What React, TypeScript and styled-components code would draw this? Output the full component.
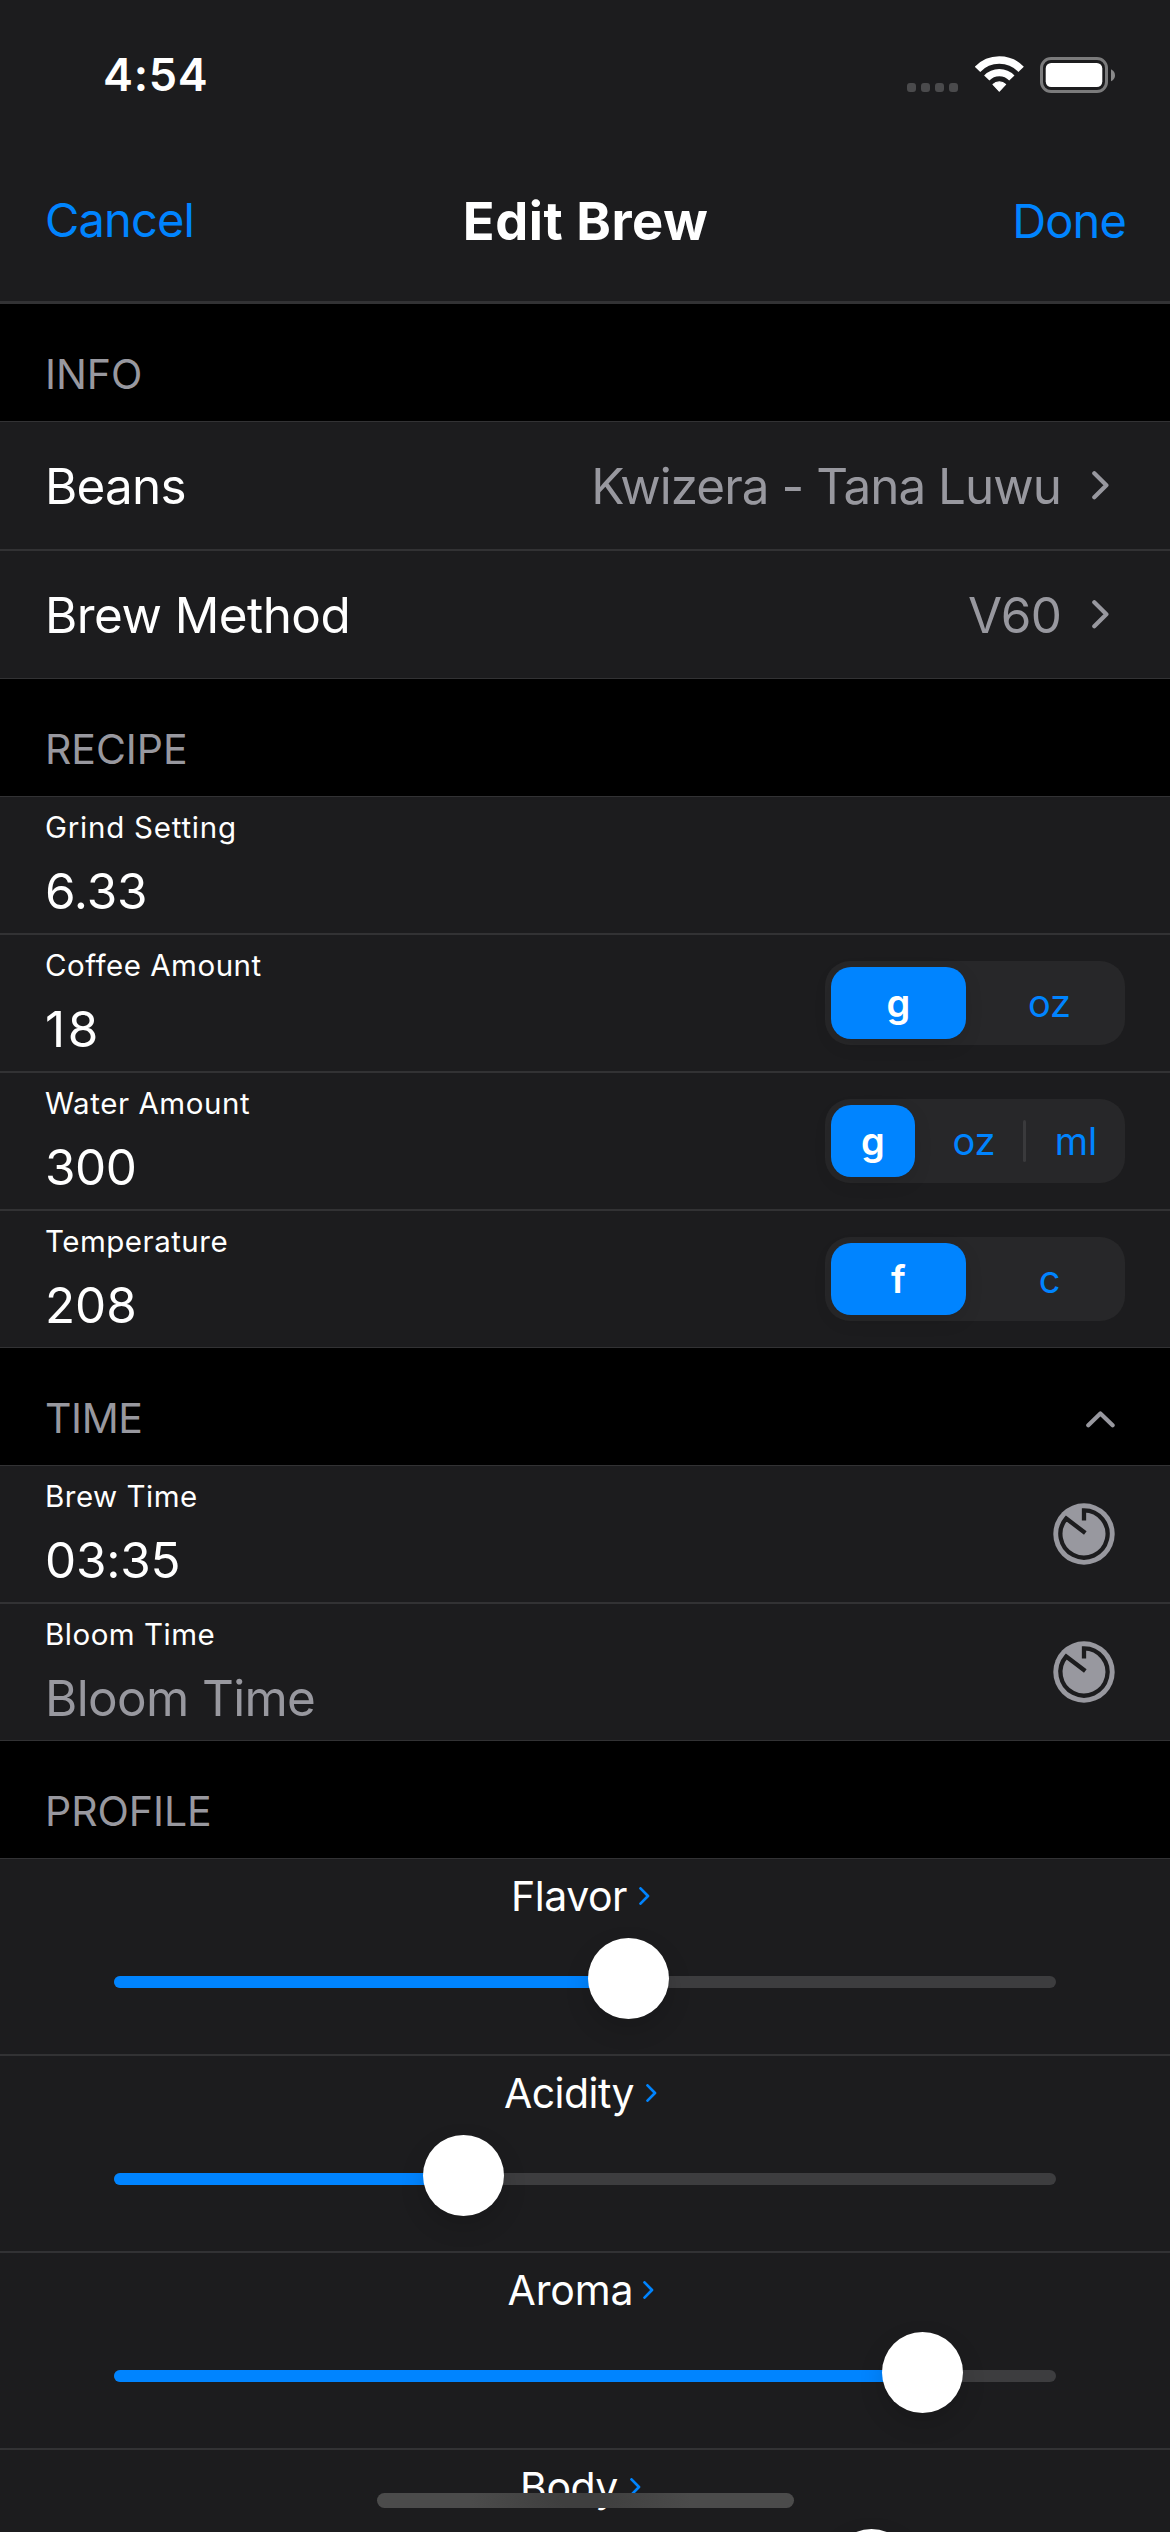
import React from "react";
import styled, { createGlobalStyle } from "styled-components";

const color = {
  page: "#000000",
  cell: "#1c1c1e",
  line: "#323234",
  text: "#ffffff",
  muted: "#98989f",
  accent: "#0084ff",
  control: "#272729",
  track: "#3d3d3f",
};

const GlobalStyle = createGlobalStyle`
  * { box-sizing: border-box; }
  html, body { margin: 0; padding: 0; background: ${color.page}; }
  body {
    font-family: Inter, Roboto, "Liberation Sans", sans-serif;
    color: ${color.text};
    overflow: hidden;
  }
`;

const Screen = styled.main`
  position: relative;
  display: flex;
  flex-direction: column;
  width: 1170px;
  height: 2532px;
  overflow: hidden;
  background: ${color.page};
`;

const TopBar = styled.header`
  flex: none;
  height: 304px;
  background: ${color.cell};
  border-bottom: 3px solid ${color.line};
`;

const StatusBar = styled.div`
  display: flex;
  align-items: center;
  justify-content: space-between;
  height: 141px;
  padding: 8px 55px 0 103px;
`;

const Clock = styled.time`
  font-size: 45px;
  line-height: 54px;
  font-weight: 600;
  letter-spacing: 0.73px;
`;

const StatusIcons = styled.div`
  display: flex;
  align-items: center;
`;

const SignalDots = styled.div`
  display: flex;
  align-self: flex-end;
  gap: 5.4px;
  margin-right: 17px;
  padding-bottom: 1px;
`;

const Dot = styled.i`
  width: 8.6px;
  height: 9px;
  border-radius: 3px;
  background: #4a4a4c;
`;

const WifiIcon = styled.svg`
  display: block;
  width: 49px;
  height: 37px;
  margin-right: 16px;
`;

const BatteryIcon = styled.svg`
  display: block;
  width: 75px;
  height: 36px;
`;

const NavBar = styled.nav`
  display: grid;
  grid-template-columns: 1fr auto 1fr;
  align-items: center;
  height: 160px;
  padding: 0 44px 0 45px;
`;

const NavButton = styled.button<{ $end?: boolean }>`
  justify-self: ${(p) => (p.$end ? "end" : "start")};
  padding: ${(p) => (p.$end ? "0" : "0 0 2px")};
  border: 0;
  background: none;
  color: ${color.accent};
  font: 400 47px/58px Inter, sans-serif;
  letter-spacing: -0.85px;
`;

const Title = styled.h1`
  margin: 0;
  font-size: 52.4px;
  line-height: 64px;
  font-weight: 700;
  letter-spacing: 0.57px;
`;

const SectionHeader = styled.div`
  flex: none;
  display: flex;
  justify-content: space-between;
  height: 117px;
  padding: 45px 55px 0 45px;
  color: ${color.muted};
`;

const SectionTitle = styled.h2<{ $track?: number }>`
  margin: 0;
  font-size: 41px;
  line-height: 50px;
  font-weight: 400;
  letter-spacing: ${(p) => p.$track ?? -0.05}px;
`;

const CollapseIcon = styled.svg`
  width: 29px;
  height: 17px;
  margin-top: 17.5px;
`;

const Group = styled.section<{ $open?: boolean }>`
  flex: none;
  background: ${color.cell};
  border-top: 1px solid ${color.line};
  border-bottom: ${(p) => (p.$open ? "0" : `1px solid ${color.line}`)};
`;

const Row = styled.div`
  display: flex;
  align-items: center;
  justify-content: space-between;
  box-sizing: content-box;

  & + & {
    border-top: 2px solid ${color.line};
  }
`;

const LinkRow = styled(Row)`
  height: 127px;
  padding: 0 61px 0 45px;
`;

const FieldRow = styled(Row)`
  height: 136px;
  padding: 0 45px;
`;

const BodyText = styled.span<{ $track?: number; $muted?: boolean }>`
  font-size: 49.4px;
  line-height: 60px;
  white-space: nowrap;
  color: ${(p) => (p.$muted ? color.muted : color.text)};
  letter-spacing: ${(p) => p.$track ?? -0.5}px;
`;

const LinkValue = styled.div`
  display: flex;
  align-items: center;
  gap: 31px;
`;

const DisclosureIcon = styled.svg`
  display: block;
  width: 17px;
  height: 29px;
`;

const Field = styled.label`
  align-self: flex-start;
  display: flex;
  flex-direction: column;
  gap: 16px;
  padding-top: 12px;
`;

const Caption = styled.span<{ $track?: number }>`
  font-size: 29.5px;
  line-height: 36px;
  letter-spacing: ${(p) => p.$track ?? 0.5}px;
`;

const Segmented = styled.div`
  display: flex;
  width: 300px;
  height: 84px;
  border-radius: 25px;
  background: ${color.control};
`;

const Segment = styled.button<{ $width: number; $selected?: boolean; $divided?: boolean }>`
  position: relative;
  width: ${(p) => p.$width}px;
  height: ${(p) => (p.$selected ? 72 : 84)}px;
  margin: ${(p) => (p.$selected ? "6px" : "0")};
  padding: ${(p) => (p.$selected ? "0" : "0 0 0 2px")};
  border: 0;
  border-radius: 20px;
  background: ${(p) => (p.$selected ? color.accent : "none")};
  box-shadow: ${(p) => (p.$selected ? "0 6px 18px rgba(0, 0, 0, 0.1)" : "none")};
  color: ${(p) => (p.$selected ? color.text : color.accent)};
  font: ${(p) => (p.$selected ? 600 : 400)} 38px/46px Inter, sans-serif;

  &::before {
    content: "";
    display: ${(p) => (p.$divided ? "block" : "none")};
    position: absolute;
    left: -2px;
    top: 21px;
    width: 3px;
    height: 42px;
    border-radius: 2px;
    background: #3a3a3c;
  }
`;

const TimerIcon = styled.svg`
  display: block;
  width: 62px;
  height: 62px;
  margin-right: 10px;
`;

const ProfileRow = styled.div`
  height: 195px;
  box-sizing: content-box;

  & + & {
    border-top: 2px solid ${color.line};
  }
`;

const ProfileLabel = styled.div<{ $gap: number }>`
  display: flex;
  align-items: center;
  justify-content: center;
  gap: ${(p) => p.$gap}px;
  height: 79px;
  padding: 0 9px 5px 0;
`;

const ProfileName = styled.span<{ $track?: number }>`
  font-size: 41px;
  line-height: 50px;
  letter-spacing: ${(p) => p.$track ?? -0.5}px;
`;

const SmallChevron = styled.svg`
  display: block;
  width: 11px;
  height: 18px;
`;

const Slider = styled.div`
  display: flex;
  align-items: center;
  height: 81px;
  padding-top: 7px;
  margin: 0 114px;
`;

const Track = styled.div`
  position: relative;
  width: 100%;
  height: 12px;
  border-radius: 6px;
  background: ${color.track};
`;

const Fill = styled.div`
  height: 12px;
  border-radius: 6px;
  background: ${color.accent};
`;

const Thumb = styled.div`
  position: absolute;
  top: -38px;
  width: 81px;
  height: 81px;
  margin-left: -40.5px;
  border-radius: 50%;
  background: #ffffff;
  box-shadow: 0 10px 24px rgba(0, 0, 0, 0.15);
`;

const HomeIndicator = styled.div`
  position: absolute;
  left: 377px;
  bottom: 24px;
  width: 417px;
  height: 15px;
  border-radius: 8px;
  background: radial-gradient(ellipse 110px 40px at 49% 50%, #3f3f3f 20%, #4b4b4b 100%);
`;

const Disclosure = () => (
  <DisclosureIcon viewBox="0 0 17 29" fill="none" stroke={color.muted} strokeWidth="4.2" strokeLinecap="round" strokeLinejoin="round">
    <path d="M2.3 2.3 14.4 14.3 2.3 26.3" />
  </DisclosureIcon>
);

const Timer = () => (
  <TimerIcon viewBox="0 0 62 62">
    <circle cx="31" cy="31" r="30.7" fill={color.muted} />
    <path
      d="M31 17.4V7.4A23.6 23.6 0 1 1 13.2 15.5L32.3 30"
      fill="none"
      stroke={color.cell}
      strokeWidth="4.3"
    />
  </TimerIcon>
);

type LinkProps = { label: string; labelTrack: number; value: string; valueTrack: number };

const LinkItem = ({ label, labelTrack, value, valueTrack }: LinkProps) => (
  <LinkRow>
    <BodyText $track={labelTrack}>{label}</BodyText>
    <LinkValue>
      <BodyText $muted $track={valueTrack}>{value}</BodyText>
      <Disclosure />
    </LinkValue>
  </LinkRow>
);

type FieldProps = {
  label: string;
  labelTrack?: number;
  value: string;
  valueTrack?: number;
  placeholder?: boolean;
  children?: React.ReactNode;
};

const FieldItem = ({ label, labelTrack, value, valueTrack, placeholder, children }: FieldProps) => (
  <FieldRow>
    <Field>
      <Caption $track={labelTrack}>{label}</Caption>
      <BodyText $track={valueTrack} $muted={placeholder}>{value}</BodyText>
    </Field>
    {children}
  </FieldRow>
);

const profile = [
  { name: "Flavor", track: -0.5, gap: 12, value: 514.5 / 942 },
  { name: "Acidity", track: -0.55, gap: 12, value: 349.5 / 942 },
  { name: "Aroma", track: -0.1, gap: 9, value: 808.5 / 942 },
  { name: "Body", track: -0.5, gap: 12, value: 757 / 942 },
];

export default function App() {
  return (
    <>
      <GlobalStyle />
      <Screen>
        <TopBar>
          <StatusBar>
            <Clock>4:54</Clock>
            <StatusIcons>
              <SignalDots>
                <Dot />
                <Dot />
                <Dot />
                <Dot />
              </SignalDots>
              <WifiIcon viewBox="0 0 49 37" fill="none" stroke="#fff">
                <path d="M2.5 13.3A30.1 30.1 0 0 1 46.1 13.3" strokeWidth="7.6" />
                <path d="M11.75 22.1A17.3 17.3 0 0 1 36.85 22.1" strokeWidth="7.3" />
                <path d="M18 28.4A9.2 9.2 0 0 1 30.6 28.4L24.3 35.2Z" fill="#fff" strokeWidth="1.2" strokeLinejoin="round" />
              </WifiIcon>
              <BatteryIcon viewBox="0 0 75 36">
                <rect x="1.5" y="1.5" width="65" height="33" rx="9.5" fill="none" stroke="#7b7b7c" strokeWidth="3" />
                <rect x="5.7" y="6" width="56.6" height="24" rx="5.5" fill="#fff" />
                <path d="M71 12.2Q75 14.2 75 18.2T71 24.2Z" fill="#8a8a8b" />
              </BatteryIcon>
            </StatusIcons>
          </StatusBar>
          <NavBar>
            <NavButton>Cancel</NavButton>
            <Title>Edit Brew</Title>
            <NavButton $end>Done</NavButton>
          </NavBar>
        </TopBar>

        <SectionHeader>
          <SectionTitle>INFO</SectionTitle>
        </SectionHeader>
        <Group>
          <LinkItem label="Beans" labelTrack={-0.78} value="Kwizera - Tana Luwu" valueTrack={-0.97} />
          <LinkItem label="Brew Method" labelTrack={-0.53} value="V60" valueTrack={-0.8} />
        </Group>

        <SectionHeader>
          <SectionTitle>RECIPE</SectionTitle>
        </SectionHeader>
        <Group>
          <FieldItem label="Grind Setting" labelTrack={0.76} value="6.33" valueTrack={-0.1} />
          <FieldItem label="Coffee Amount" value="18" valueTrack={2.6}>
            <Segmented>
              <Segment $width={135} $selected>g</Segment>
              <Segment $width={153}>oz</Segment>
            </Segmented>
          </FieldItem>
          <FieldItem label="Water Amount" labelTrack={0.55} value="300" valueTrack={-0.4}>
            <Segmented>
              <Segment $width={84} $selected>g</Segment>
              <Segment $width={104}>oz</Segment>
              <Segment $width={100} $divided>ml</Segment>
            </Segmented>
          </FieldItem>
          <FieldItem label="Temperature" value="208" valueTrack={-0.04}>
            <Segmented>
              <Segment $width={135} $selected>f</Segment>
              <Segment $width={153}>c</Segment>
            </Segmented>
          </FieldItem>
        </Group>

        <SectionHeader>
          <SectionTitle $track={-0.4}>TIME</SectionTitle>
          <CollapseIcon viewBox="0 0 29 17" fill="none" stroke={color.muted} strokeWidth="4.2" strokeLinecap="round" strokeLinejoin="round">
            <path d="M2.3 14.3 14.4 2.5 26.6 14.3" />
          </CollapseIcon>
        </SectionHeader>
        <Group>
          <FieldItem label="Brew Time" value="03:35" valueTrack={-0.2}>
            <Timer />
          </FieldItem>
          <FieldItem label="Bloom Time" value="Bloom Time" valueTrack={-0.63} placeholder>
            <Timer />
          </FieldItem>
        </Group>

        <SectionHeader>
          <SectionTitle>PROFILE</SectionTitle>
        </SectionHeader>
        <Group $open>
          {profile.map((item) => (
            <ProfileRow key={item.name}>
              <ProfileLabel $gap={item.gap}>
                <ProfileName $track={item.track}>{item.name}</ProfileName>
                <SmallChevron viewBox="0 0 11 18" fill="none" stroke={color.accent} strokeWidth="2.7" strokeLinecap="round" strokeLinejoin="round">
                  <path d="M1.5 1.4 9 9 1.5 16.6" />
                </SmallChevron>
              </ProfileLabel>
              <Slider>
                <Track>
                  <Fill style={{ width: `${item.value * 100}%` }} />
                  <Thumb style={{ left: `${item.value * 100}%` }} />
                </Track>
              </Slider>
            </ProfileRow>
          ))}
        </Group>

        <HomeIndicator />
      </Screen>
    </>
  );
}
